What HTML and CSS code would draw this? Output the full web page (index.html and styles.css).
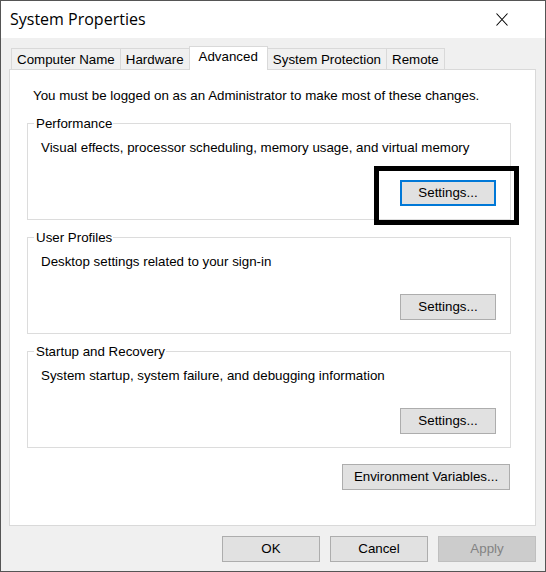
FILE: index.html
```html
<!DOCTYPE html>
<html lang="en">
<head>
<meta charset="utf-8">
<title>System Properties</title>
<link rel="stylesheet" href="styles.css">
</head>
<body>
<div class="window">
  <div class="titlebar">
    <span class="title">System Properties</span>
    <svg class="close" width="12" height="13" viewBox="0 0 12 13" aria-label="Close">
      <path d="M0.5 0.5 L11.5 12.5 M11.5 0.5 L0.5 12.5" stroke="#000" stroke-width="1.1" fill="none"/>
    </svg>
  </div>
  <div class="content">
    <div class="tabs">
      <div class="tab">Computer Name</div>
      <div class="tab">Hardware</div>
      <div class="tab active">Advanced</div>
      <div class="tab">System Protection</div>
      <div class="tab">Remote</div>
    </div>
    <div class="panel">
      <p class="intro">You must be logged on as an Administrator to make most of these changes.</p>
      <div class="group">
        <div class="legend">Performance</div>
        <p class="desc">Visual effects, processor scheduling, memory usage, and virtual memory</p>
        <div class="actions"><button class="btn btn-settings btn-focus">Settings...</button></div>
      </div>
      <div class="group">
        <div class="legend">User Profiles</div>
        <p class="desc">Desktop settings related to your sign-in</p>
        <div class="actions"><button class="btn btn-settings">Settings...</button></div>
      </div>
      <div class="group">
        <div class="legend">Startup and Recovery</div>
        <p class="desc">System startup, system failure, and debugging information</p>
        <div class="actions"><button class="btn btn-settings">Settings...</button></div>
      </div>
      <div class="env-row"><button class="btn btn-env">Environment Variables...</button></div>
    </div>
    <div class="footer">
      <button class="btn btn-dialog">OK</button>
      <button class="btn btn-dialog">Cancel</button>
      <button class="btn btn-dialog btn-disabled">Apply</button>
    </div>
  </div>
  <div class="highlight"></div>
</div>
</body>
</html>
```
FILE: styles.css
```css
* { box-sizing: border-box; }

body {
  margin: 0;
  background: #f0f0f0;
  font-family: "Liberation Sans", Arial, sans-serif;
  font-size: 13.33px;
  color: #000;
}

.window {
  position: relative;
  width: 546px;
  height: 572px;
  border: 1px solid #555555;
  background: #f0f0f0;
}

.titlebar {
  height: 37px;
  background: #fff;
  display: flex;
  align-items: center;
  justify-content: space-between;
  padding: 0 37px 0 9px;
}

.title {
  font-family: "Open Sans", "Noto Sans", sans-serif;
  font-size: 16px;
  line-height: 37px;
}

.close { display: block; }

.content { padding-top: 8px; }

.tabs {
  display: flex;
  align-items: flex-end;
  height: 23px;
  margin-left: 10px;
}

.tab {
  height: 21px;
  line-height: 21px;
  padding: 0 5px;
  border: 1px solid #d9d9d9;
  border-bottom: 0;
  background: #f0f0f0;
  white-space: nowrap;
}

.tab + .tab { margin-left: -1px; }

.tab.active {
  height: 24px;
  line-height: 20px;
  margin-bottom: -1px;
  padding: 0 9px;
  background: #fff;
  position: relative;
  z-index: 1;
}

.panel {
  margin-left: 8px;
  width: 527px;
  height: 457px;
  background: #fff;
  border: 1px solid #d9d9d9;
  padding: 18px 24px 0 17px;
}

.intro {
  margin: 0 0 0 6px;
  line-height: 15px;
}

.group {
  margin-top: 20px;
  border: 1px solid #dcdcdc;
  padding: 0 14px 13px 6px;
}

.group + .group { margin-top: 17px; }

.legend {
  width: max-content;
  margin-top: -8px;
  padding: 0 1px 0 2px;
  background: #fff;
  line-height: 15px;
}

.desc {
  margin: 9px 0 0 7px;
  line-height: 15px;
}

.actions {
  display: flex;
  justify-content: flex-end;
  margin-top: 25px;
}

.btn {
  height: 26px;
  padding: 0;
  border: 1px solid #adadad;
  background: #e1e1e1;
  font-family: inherit;
  font-size: 13.33px;
  line-height: 24px;
  color: #000;
  text-align: center;
}

.btn-settings { width: 96px; }

.btn-focus {
  border: 2px solid #0078d7;
  line-height: 22px;
}

.env-row {
  display: flex;
  justify-content: flex-end;
  margin-top: 16px;
  padding-right: 1px;
}

.btn-env { width: 168px; }

.footer {
  display: flex;
  justify-content: flex-end;
  gap: 10px;
  margin-top: 10px;
  padding-right: 9px;
}

.btn-dialog { width: 98px; }

.btn-disabled {
  background: #cccccc;
  border-color: #bfbfbf;
  color: #838383;
}

.highlight {
  position: absolute;
  left: 373px;
  top: 165px;
  width: 145px;
  height: 59px;
  border: 5px solid #000;
}
```
